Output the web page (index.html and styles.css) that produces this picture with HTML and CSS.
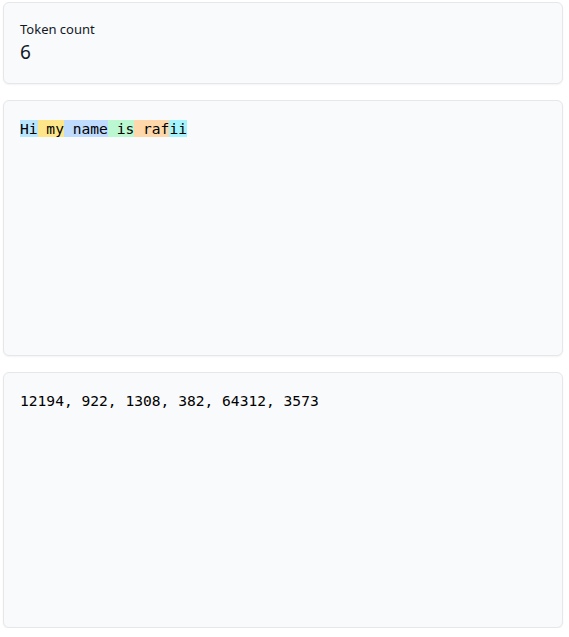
FILE: index.html
```html
<!DOCTYPE html>
<html>
<head>
<meta charset="utf-8">
<link rel="stylesheet" href="styles.css">
</head>
<body>
<div class="page">
  <div class="card count-card">
    <div class="label">Token count</div>
    <div class="value">6</div>
  </div>
  <div class="card text-card">
    <div class="mono"><span class="t t1">Hi</span><span class="t t2"> my</span><span class="t t3"> name</span><span class="t t4"> is</span><span class="t t5"> raf</span><span class="t t6">ii</span></div>
  </div>
  <div class="card text-card">
    <div class="mono">12194, 922, 1308, 382, 64312, 3573</div>
  </div>
</div>
</body>
</html>
```
FILE: styles.css
```css
html, body {
  margin: 0;
  padding: 0;
  background: #ffffff;
}
.page {
  padding: 2px 6px 0 3px;
  display: flex;
  flex-direction: column;
  gap: 16px;
  font-family: "Noto Sans", "Open Sans", sans-serif;
  color: #111827;
}
.card {
  background: #f9fafb;
  border: 1px solid #e5e7eb;
  border-radius: 6px;
  box-shadow: 0 1px 2px rgba(0,0,0,0.05);
  box-sizing: border-box;
  padding: 16px;
}
.count-card {
  height: 82px;
  padding-top: 17px;
}
.label {
  font-size: 13px;
  line-height: 18px;
}
.value {
  font-size: 19px;
  line-height: 28px;
}
.text-card {
  height: 256px;
  padding-top: 18px;
}
.mono {
  font-family: "DejaVu Sans Mono", "Liberation Mono", monospace;
  font-size: 14.6px;
  line-height: 19px;
  white-space: pre;
  color: #000000;
}
.t { padding: 0; }
.t1 { background: #bae6fd; }
.t2 { background: #fde68a; }
.t3 { background: #bfdbfe; }
.t4 { background: #bbf7d0; }
.t5 { background: #fed7aa; }
.t6 { background: #a5f3fc; }
```
